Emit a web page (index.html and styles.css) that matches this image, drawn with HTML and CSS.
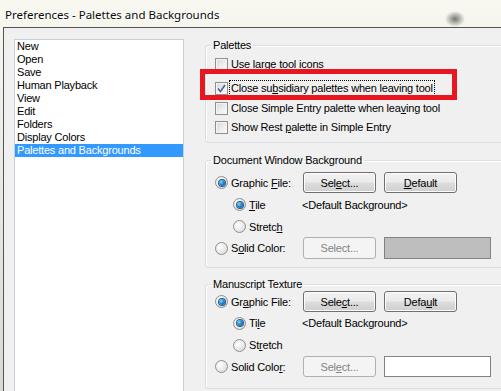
FILE: index.html
```
<!DOCTYPE html>
<html>
  <head>
    <meta charset="UTF-8" />
    <link rel="stylesheet" href="styles.css">
  </head>

  <body>
    <div class="window">
      <div class="titlebar">Preferences - Palettes and Backgrounds</div>

      <div class="client">
        <ul class="listbox">
          <li>New</li>
          <li>Open</li>
          <li>Save</li>
          <li>Human Playback</li>
          <li>View</li>
          <li>Edit</li>
          <li>Folders</li>
          <li>Display Colors</li>
          <li class="selected">Palettes and Backgrounds</li>
        </ul>

        <div class="pane">
          <fieldset class="group group-palettes">
            <legend>Palettes</legend>
            <label class="check-row first">
              <span class="checkbox"></span>
              <span>Use large tool icons</span>
            </label>
            <label class="check-row">
              <span class="checkbox checked">
                <svg width="9" height="9" viewBox="0 0 9 9"><path d="M1 4.5 L3.5 7.5 L8 1" fill="none" stroke="#4b5f9e" stroke-width="1.6"/></svg>
              </span>
              <span class="focused">Close su<u>b</u>sidiary palettes when leaving tool</span>
            </label>
            <label class="check-row">
              <span class="checkbox"></span>
              <span>Close Simple Entry palette when lea<u>v</u>ing tool</span>
            </label>
            <label class="check-row last">
              <span class="checkbox"></span>
              <span>Show Rest <u>p</u>alette in Simple Entry</span>
            </label>
          </fieldset>

          <fieldset class="group group-doc">
            <legend>Document Window Background</legend>
            <div class="bg-grid">
              <label class="radio-row"><span class="radio on"></span><span>Graphic <u>F</u>ile:</span></label>
              <button class="btn">Sel<u>e</u>ct...</button>
              <button class="btn"><u>D</u>efault</button>

              <label class="radio-row sub"><span class="radio on"></span><span><u>T</u>ile</span></label>
              <div class="file-name">&lt;Default Background&gt;</div>
              <div></div>

              <label class="radio-row sub"><span class="radio"></span><span>Stretc<u>h</u></span></label>
              <div></div>
              <div></div>

              <label class="radio-row"><span class="radio"></span><span>S<u>o</u>lid Color:</span></label>
              <button class="btn" disabled>Select...</button>
              <div class="swatch gray"></div>
            </div>
          </fieldset>

          <fieldset class="group group-texture">
            <legend>Manuscript Texture</legend>
            <div class="bg-grid">
              <label class="radio-row"><span class="radio on"></span><span>Gr<u>a</u>phic File:</span></label>
              <button class="btn">Sele<u>c</u>t...</button>
              <button class="btn">Defa<u>u</u>lt</button>

              <label class="radio-row sub"><span class="radio on"></span><span>Ti<u>l</u>e</span></label>
              <div class="file-name">&lt;Default Background&gt;</div>
              <div></div>

              <label class="radio-row sub"><span class="radio"></span><span>St<u>r</u>etch</span></label>
              <div></div>
              <div></div>

              <label class="radio-row"><span class="radio"></span><span>Solid Colo<u>r</u>:</span></label>
              <button class="btn" disabled>Sel<u>e</u>ct...</button>
              <div class="swatch"></div>
            </div>
          </fieldset>
        </div>
      </div>

      <!-- annotation drawn over the dialog -->
      <div class="highlight"></div>
    </div>
  </body>
</html>
```

FILE: styles.css
```
html,
body {
  margin: 0;
  padding: 0;
}

.window {
  position: relative;
  width: 501px;
  height: 391px;
  overflow: hidden;
  display: flex;
  flex-direction: column;
  background: linear-gradient(180deg, #f8f8f1 0%, #ebebe4 40%, #d9d9d2 100%);
  font-family: "Liberation Sans", Arial, sans-serif;
  font-size: 11px;
  color: #000;
}

.titlebar {
  height: 27px;
  flex: none;
  padding-left: 5px;
  line-height: 30px;
  font-family: "Noto Sans", "Liberation Sans", sans-serif;
  font-size: 11.5px;
  color: #0a0a0a;
  text-shadow: 0 0 6px #fff, 0 0 3px #fff;
  background: radial-gradient(ellipse 10px 8px at 455px 19px, rgba(60, 60, 60, 0.7), rgba(60, 60, 60, 0) 100%);
}

.client {
  flex: 1;
  display: flex;
  align-items: flex-start;
  margin-left: 3px;
  border-left: 1px solid #555;
  border-top: 1px solid #555;
  background: #f0f0f0;
  padding: 11px 0 0 10px;
  min-height: 0;
  letter-spacing: -0.2px;
}

.listbox {
  list-style: none;
  margin: 0;
  padding: 0;
  width: 168px;
  height: 400px;
  flex: none;
  background: #fff;
  border: 1px solid #c9ced3;
  line-height: 13px;
}

.listbox li {
  padding-left: 2px;
  height: 13px;
  white-space: nowrap;
}

.listbox li.selected {
  background: #3399ff;
  color: #fff;
}

.pane {
  margin-left: 21px;
  display: flex;
  flex-direction: column;
  flex: none;
}

/* the groups run on past the right edge of the capture */
.group {
  margin: 0;
  width: 300px;
  border: 1px solid #d5dfe5;
  border-radius: 3px;
  padding: 0 0 0 9px;
  box-shadow: inset 1px 1px 0 #fff;
}

.group legend {
  padding: 0 2px;
  margin-left: -4px;
  line-height: 13px;
  height: 13px;
  color: #000;
}

.group-palettes {
  padding-top: 2px;
  padding-bottom: 5px;
}

.group-doc {
  margin-top: 11px;
  padding-top: 5px;
  padding-bottom: 8px;
}

.group-texture {
  margin-top: 10px;
  padding-top: 0;
  padding-bottom: 11px;
}

/* checkboxes */
.check-row {
  display: flex;
  align-items: center;
  height: 20px;
  white-space: nowrap;
}

.check-row.first {
  margin-bottom: 4px;
}

.check-row.last {
  margin-top: -1px;
}

.checkbox {
  width: 11px;
  height: 11px;
  flex: none;
  border: 1px solid #8e8f8f;
  margin-right: 3px;
  background: linear-gradient(135deg, #d8d8d8 0%, #f6f6f6 80%, #fff 100%);
  box-shadow: inset 0 0 0 1px #f4f4f4;
  display: flex;
  align-items: center;
  justify-content: center;
}

.focused {
  outline: 1px dotted #000;
  outline-offset: 1px;
}

u {
  text-decoration-thickness: 1px;
  text-underline-offset: 1px;
}

/* radio grid */
.bg-grid {
  display: grid;
  grid-template-columns: 80px 73px 107px;
  grid-template-rows: 21px 23px 21px 22px;
  column-gap: 8px;
  align-items: center;
}

.group-texture .bg-grid {
  grid-template-rows: 21px 22px 22px 21px;
}

.radio-row {
  display: flex;
  align-items: center;
  white-space: nowrap;
}

.radio-row.sub {
  padding-left: 18px;
}

.radio {
  width: 11px;
  height: 11px;
  flex: none;
  border: 1px solid #8e8f8f;
  border-radius: 50%;
  margin-right: 3px;
  background: radial-gradient(circle at 35% 35%, #ffffff 0%, #e6e6e6 60%, #cfcfcf 100%);
  display: flex;
  align-items: center;
  justify-content: center;
}

.radio.on::after {
  content: "";
  width: 6px;
  height: 6px;
  border-radius: 50%;
  background: radial-gradient(circle at 35% 35%, #8fd2ff 0%, #2a86c9 45%, #0d4f85 100%);
  box-shadow: 0 0 0 1px #1d5f96;
}

.file-name {
  white-space: nowrap;
  margin-left: -1px;
}

.btn {
  width: 73px;
  height: 21px;
  padding: 0;
  border: 1px solid #707070;
  border-radius: 3px;
  font-family: "Liberation Sans", Arial, sans-serif;
  font-size: 11px;
  letter-spacing: -0.2px;
  color: #000;
  background: linear-gradient(180deg, #f2f2f2 0%, #ebebeb 48%, #dddddd 52%, #cfcfcf 100%);
  box-shadow: inset 0 0 0 1px #fcfcfc;
}

.btn:disabled {
  border-color: #adb2b5;
  background: #f4f4f4;
  color: #838383;
  box-shadow: none;
}

.group-doc .bg-grid .btn:disabled,
.group-doc .swatch {
  height: 22px;
}

.swatch {
  box-sizing: border-box;
  width: 107px;
  height: 21px;
  border: 1px solid #828282;
  background: #fff;
}

.swatch.gray {
  background: #bebebe;
}

.highlight {
  position: absolute;
  left: 200px;
  top: 69px;
  width: 247px;
  height: 21px;
  border: 5px solid #e8171f;
}
```
